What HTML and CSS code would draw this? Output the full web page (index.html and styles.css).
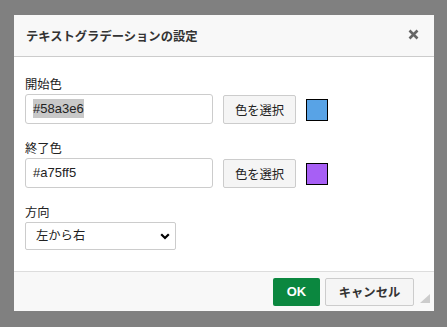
FILE: index.html
```html
<!DOCTYPE html>
<html lang="ja">

<head>
    <meta charset="UTF-8">
    <meta name="viewport" content="width=device-width, initial-scale=1.0">
    <title>テキストグラデーションの設定</title>
    <link rel="stylesheet" href="styles.css">
</head>

<body>
    <div class="dialog">
        <div class="dialog-header">
            <h2 class="dialog-title">テキストグラデーションの設定</h2>
            <span class="close">
                <svg width="11" height="11" viewBox="0 0 11 11">
                    <path d="M1.5 1.5 L9.5 9.5 M9.5 1.5 L1.5 9.5" stroke="#666" stroke-width="2.6" fill="none" />
                </svg>
            </span>
        </div>

        <div class="dialog-body">
            <div class="group">
                <label class="label">開始色</label>
                <div class="row">
                    <div class="field"><span class="sel">#58a3e6</span></div>
                    <button class="pick">色を選択</button>
                    <span class="swatch swatch-start"></span>
                </div>
            </div>

            <div class="group">
                <label class="label">終了色</label>
                <div class="row">
                    <div class="field">#a75ff5</div>
                    <button class="pick">色を選択</button>
                    <span class="swatch swatch-end"></span>
                </div>
            </div>

            <div class="group">
                <label class="label">方向</label>
                <select class="direction">
                    <option>左から右</option>
                    <option>上から下</option>
                </select>
            </div>
        </div>

        <div class="dialog-footer">
            <button class="btn btn-ok">OK</button>
            <button class="btn btn-cancel">キャンセル</button>
            <span class="grip"></span>
        </div>
    </div>
</body>

</html>
```

FILE: styles.css
```css
body {
    margin: 0;
    background: #808080;
    font-family: "Liberation Sans", "Noto Sans CJK JP", sans-serif;
    padding: 15px 13px 0 14px;
    height: 327px;
    box-sizing: border-box;
    overflow: hidden;
}

.dialog {
    width: 420px;
    background: #ffffff;
}

.dialog-header {
    height: 41px;
    background: #f8f8f8;
    border-bottom: 1px solid #cccccc;
    display: flex;
    align-items: center;
    justify-content: space-between;
    padding: 0 15px 0 12px;
}

.dialog-title {
    margin: 0;
    font-size: 12.3px;
    font-weight: bold;
    color: #333;
}

.close {
    display: flex;
    margin-top: -2px;
}

.dialog-body {
    padding: 19px 11px 21px;
}

.group {
    margin-bottom: 16px;
}

.group:last-child {
    margin-bottom: 0;
}

.label {
    display: block;
    font-size: 12.3px;
    line-height: 18px;
    color: #222;
}

.row {
    display: flex;
    align-items: center;
    gap: 10px;
}

.field {
    width: 188px;
    height: 30px;
    box-sizing: border-box;
    border: 1px solid #cccccc;
    border-radius: 3px;
    padding: 0 7px;
    font-size: 13px;
    line-height: 28px;
    color: #222;
}

.sel {
    background: #c8c8c8;
    padding: 2px 0;
}

.pick {
    width: 73px;
    height: 29px;
    margin-top: 1px;
    border: 1px solid #cccccc;
    border-radius: 2px;
    background: #f5f5f5;
    font-family: inherit;
    font-size: 12.3px;
    color: #222;
    padding: 0;
}

.swatch {
    width: 22px;
    height: 22px;
    box-sizing: border-box;
    border: 1.5px solid #000;
    margin-top: 1px;
}

.swatch-start {
    background: #58a3e6;
}

.swatch-end {
    background: #a75ff5;
}

.direction {
    appearance: none;
    width: 151px;
    height: 28px;
    border: 1px solid #cccccc;
    border-radius: 2px;
    padding: 0 10px;
    font-family: inherit;
    font-size: 12.3px;
    color: #222;
    background: #fff url("data:image/svg+xml;utf8,<svg xmlns='http://www.w3.org/2000/svg' width='10' height='7' viewBox='0 0 10 7'><path d='M1.2 1.2 L5 5 L8.8 1.2' stroke='%23000' stroke-width='2.2' fill='none'/></svg>") no-repeat right 5px center;
}

.dialog-footer {
    position: relative;
    height: 39px;
    background: #f8f8f8;
    border-top: 1px solid #dddddd;
    display: flex;
    align-items: center;
    justify-content: flex-end;
    gap: 5px;
    padding-right: 20px;
}

.btn {
    height: 28px;
    border-radius: 2px;
    font-family: inherit;
    font-size: 12.3px;
    font-weight: bold;
    padding: 0;
}

.btn-ok {
    width: 47px;
    background: #0b873f;
    color: #fff;
    border: none;
    font-size: 13px;
}

.btn-cancel {
    width: 89px;
    background: #f5f5f5;
    color: #333;
    border: 1px solid #cccccc;
}

.grip {
    position: absolute;
    right: 4px;
    bottom: 8px;
    width: 0;
    height: 0;
    border-left: 10px solid transparent;
    border-bottom: 9px solid #cccccc;
}
```
